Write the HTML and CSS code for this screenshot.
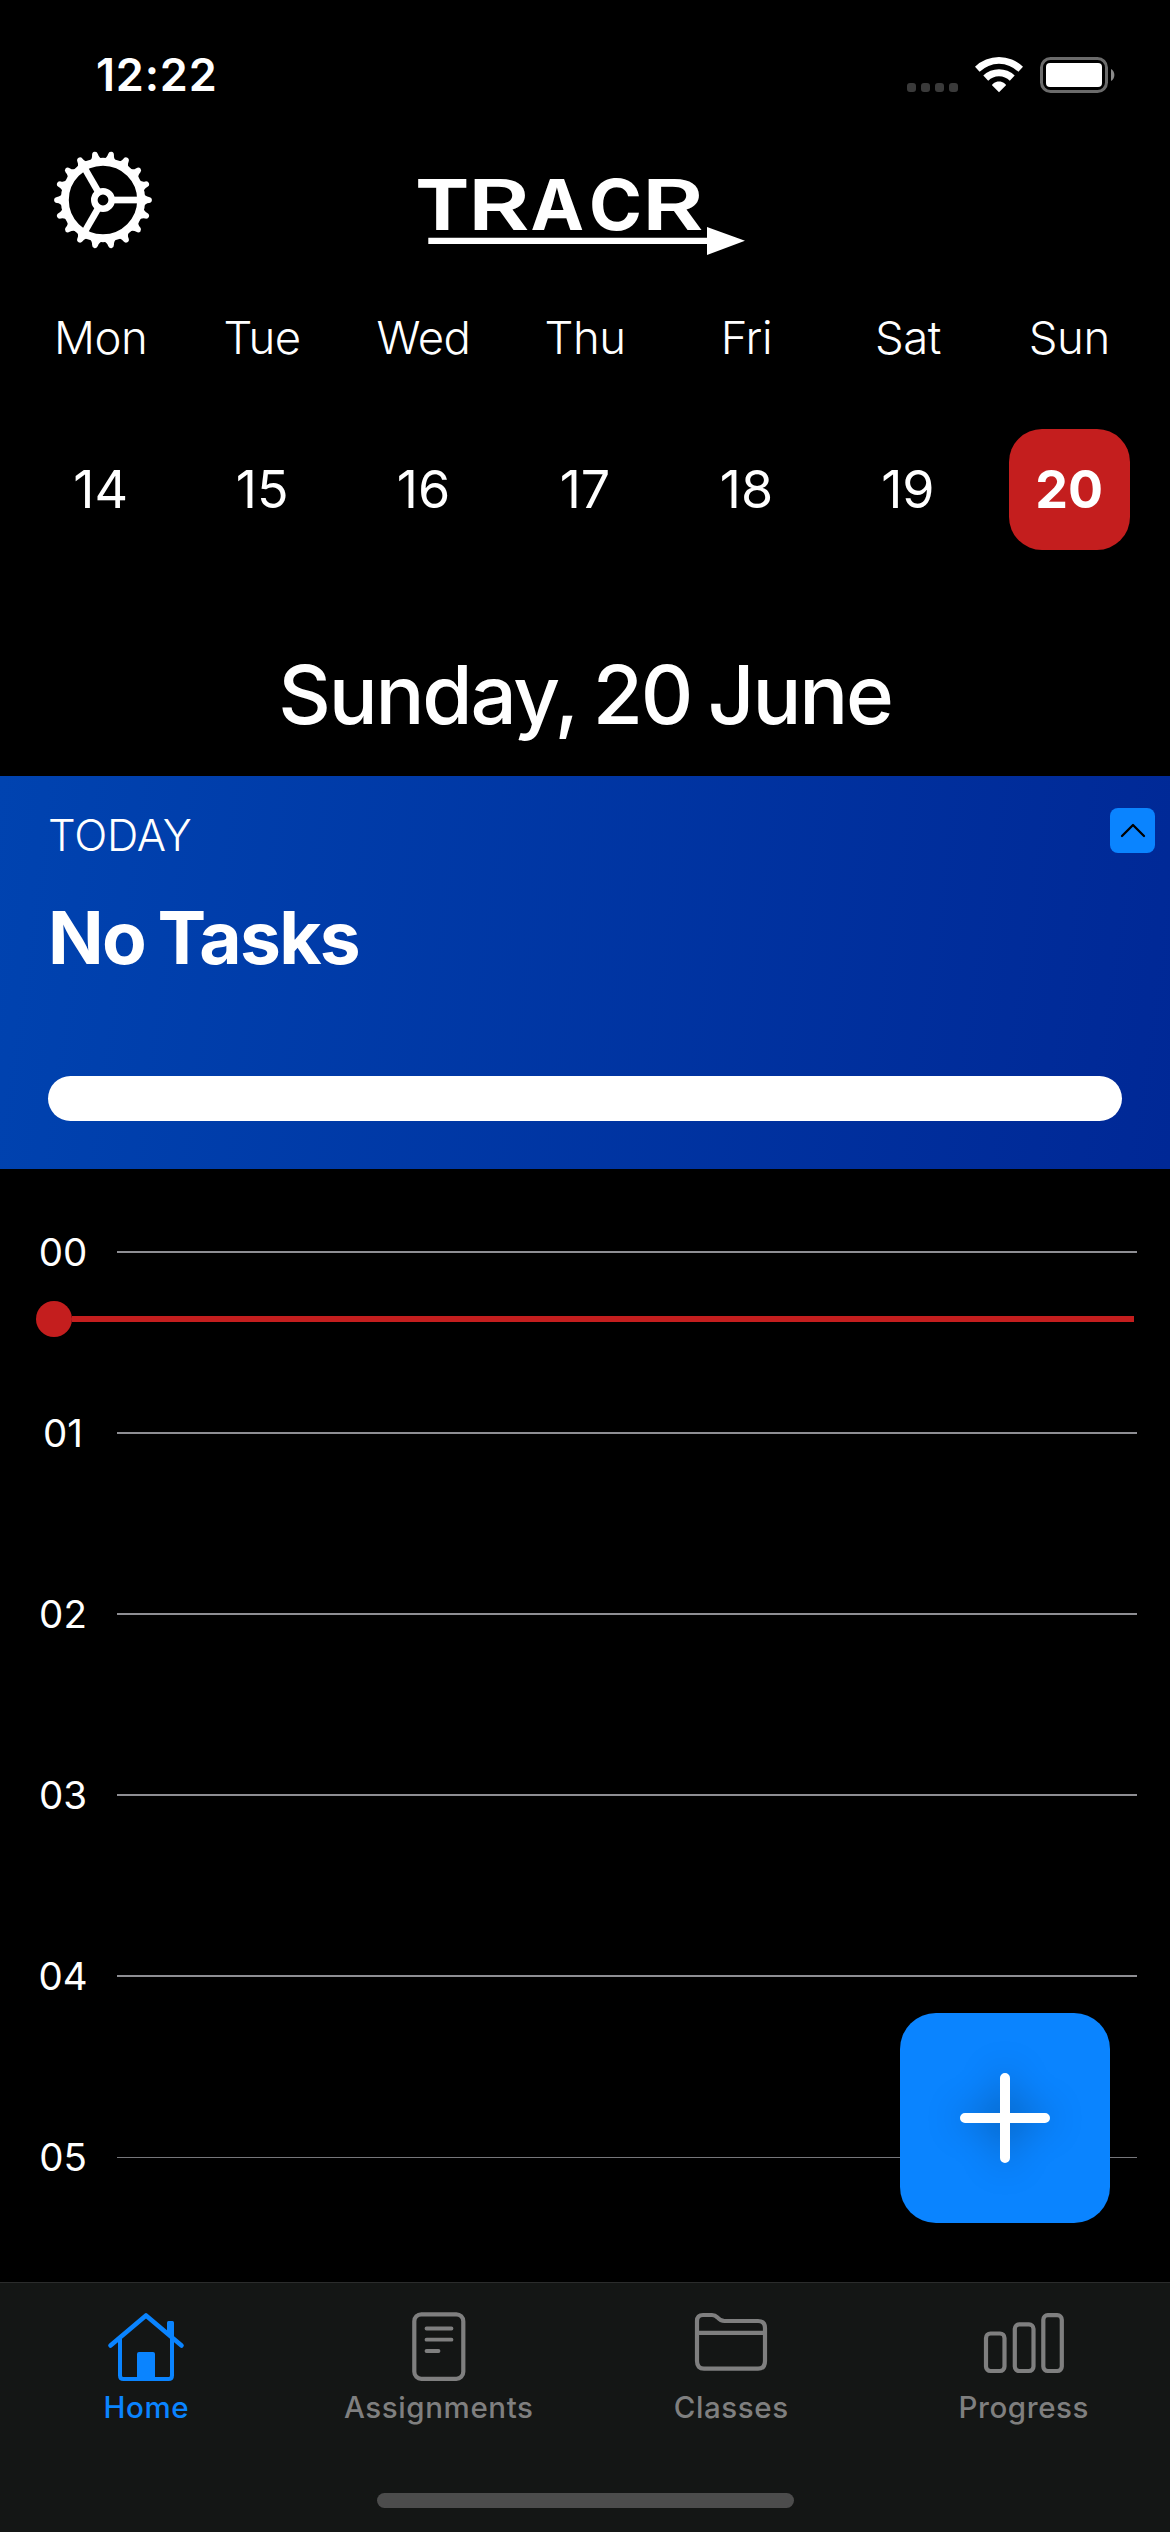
FILE: index.html
```html
<!DOCTYPE html>
<html lang="en">
<head>
<meta charset="utf-8">
<title>TRACR</title>
<link rel="stylesheet" href="styles.css">
</head>
<body>
<main class="app">
  <div class="status">
    <span class="time">12:22</span>
    <svg class="status-icons" width="210" height="40" viewBox="0 0 210 40">
      <g fill="#3a3a3a">
        <rect x="2" y="28" width="9" height="9" rx="3"/>
        <rect x="16" y="28" width="9" height="9" rx="3"/>
        <rect x="30" y="28" width="9" height="9" rx="3"/>
        <rect x="44" y="28" width="9" height="9" rx="3"/>
      </g>
      <g fill="#fff">
        <path d="M94 26.4 C89.8 26.4 87 29.2 87 30.2 L94 37.2 L101 30.2 C101 29.2 98.200 26.400 94 26.400 Z"/>
        <path d="M78.300 20.600 A22.400 22.400 0 0 1 109.700 20.600 L104.800 25.800 A15.200 15.200 0 0 0 83.200 25.800 Z"/>
        <path d="M70 11.800 A34.500 34.500 0 0 1 118 11.800 L113.400 16.800 A27.700 27.700 0 0 0 74.600 16.800 Z"/>
        <rect x="141" y="8" width="56" height="24" rx="4"/>
      </g>
      <rect x="136.500" y="3.500" width="65" height="33" rx="9" fill="none" stroke="#6b6b6b" stroke-width="3"/>
      <path d="M206 14 A7 7 0 0 1 206 26 Z" fill="#8a8a8a"/>
    </svg>
  </div>

  <header class="header">
    <svg class="gear" width="98" height="98" viewBox="-49 -49 98 98" fill="#fff">
      <defs>
        <path id="tooth" d="M40 -7.200 Q42.500 -3.200 46 -3 Q48.900 -2.500 48.900 0 Q48.900 2.500 46 3 Q42.500 3.200 40 7.200 Z"/>
      </defs>
      <circle r="38.200" fill="none" stroke="#fff" stroke-width="8"/>
      <circle r="8.700" fill="none" stroke="#fff" stroke-width="6.600"/>
      <g stroke="#fff" stroke-width="6.700">
        <path d="M11 0H36"/>
        <path d="M11 0H36" transform="rotate(120)"/>
        <path d="M11 0H36" transform="rotate(240)"/>
      </g>
      <use href="#tooth"/>
      <use href="#tooth" transform="rotate(20)"/>
      <use href="#tooth" transform="rotate(40)"/>
      <use href="#tooth" transform="rotate(60)"/>
      <use href="#tooth" transform="rotate(80)"/>
      <use href="#tooth" transform="rotate(100)"/>
      <use href="#tooth" transform="rotate(120)"/>
      <use href="#tooth" transform="rotate(140)"/>
      <use href="#tooth" transform="rotate(160)"/>
      <use href="#tooth" transform="rotate(180)"/>
      <use href="#tooth" transform="rotate(200)"/>
      <use href="#tooth" transform="rotate(220)"/>
      <use href="#tooth" transform="rotate(240)"/>
      <use href="#tooth" transform="rotate(260)"/>
      <use href="#tooth" transform="rotate(280)"/>
      <use href="#tooth" transform="rotate(300)"/>
      <use href="#tooth" transform="rotate(320)"/>
      <use href="#tooth" transform="rotate(340)"/>
    </svg>
    <svg class="logo" width="330" height="100" viewBox="0 -12 330 100">
      <text class="logo-text" y="60.700"><tspan x="0.200" textLength="54" lengthAdjust="spacingAndGlyphs">T</tspan><tspan class="logo-r" x="52.800" textLength="62" lengthAdjust="spacingAndGlyphs">R</tspan><tspan x="115.600" textLength="53.500" lengthAdjust="spacingAndGlyphs">A</tspan><tspan x="174" textLength="53" lengthAdjust="spacingAndGlyphs">C</tspan><tspan class="logo-r" x="226.800" textLength="62" lengthAdjust="spacingAndGlyphs">R</tspan></text>
      <path d="M13.300 68.700H292V58L330 71.700L292 86V75H13.300Z" fill="#fff"/>
    </svg>
  </header>

  <section class="week">
    <span class="day">Mon</span><span class="day">Tue</span><span class="day">Wed</span><span class="day">Thu</span><span class="day">Fri</span><span class="day">Sat</span><span class="day">Sun</span>
    <span class="date">14</span><span class="date">15</span><span class="date">16</span><span class="date">17</span><span class="date">18</span><span class="date">19</span><span class="date"><b class="selected">20</b></span>
  </section>

  <h1 class="title"><span>Sunday, 20 June</span></h1>

  <section class="card">
    <div class="card-top">
      <div class="card-copy">
        <span class="card-label">TODAY</span>
        <strong class="card-title">No Tasks</strong>
      </div>
      <span class="collapse">
        <svg width="45" height="45" viewBox="0 0 45 45"><path d="M12 28L23 17L34 28" fill="none" stroke="#000" stroke-width="2.300" stroke-linecap="round" stroke-linejoin="round"/></svg>
      </span>
    </div>
    <div class="progress"></div>
  </section>

  <section class="timeline">
    <div class="hour"><span class="hour-label">00</span><i class="rule"></i></div>
    <div class="hour"><span class="hour-label">01</span><i class="rule"></i></div>
    <div class="hour"><span class="hour-label">02</span><i class="rule"></i></div>
    <div class="hour"><span class="hour-label">03</span><i class="rule"></i></div>
    <div class="hour"><span class="hour-label">04</span><i class="rule"></i></div>
    <div class="hour"><span class="hour-label">05</span><i class="rule rule-thin"></i></div>
    <div class="now"><i class="now-dot"></i><i class="now-line"></i></div>
    <div class="add">
      <svg width="210" height="210" viewBox="0 0 210 210"><path class="plus" d="M105 65V145M65 105H145"/></svg>
    </div>
  </section>

  <nav class="tabs">
    <div class="tab-row">
      <div class="tab active">
        <svg width="90" height="76" viewBox="0 0 90 76" fill="none" stroke="currentColor" stroke-width="4" stroke-linecap="round" stroke-linejoin="round">
          <path d="M9.500 37.500L45 7.500L80.500 37.500" stroke-width="4.600"/>
          <path d="M19 31V67.500Q19 71 22.500 71H67.500Q71 71 71 67.500V31"/>
          <path d="M66 24V14.500Q66 13 67.500 13H71.500Q73 13 73 14.500V31Z" fill="currentColor" stroke="none"/>
          <path d="M36 71V46Q36 44 38 44H52Q54 44 54 46V71Z" fill="currentColor" stroke="none"/>
        </svg>
        <span class="tab-label">Home</span>
      </div>
      <div class="tab">
        <svg width="90" height="76" viewBox="0 0 90 76" fill="none" stroke="currentColor" stroke-width="4.200" stroke-linecap="round">
          <rect x="20.300" y="6.300" width="49" height="64.500" rx="7"/>
          <path d="M32.500 20.500H57.500M32.500 31.700H57.500M32.500 43H44.500" stroke-width="3.800"/>
        </svg>
        <span class="tab-label">Assignments</span>
      </div>
      <div class="tab">
        <svg width="90" height="76" viewBox="0 0 90 76" fill="none" stroke="currentColor" stroke-width="4.200" stroke-linejoin="round">
          <path d="M11 53V13Q11 7 17 7H26Q29 7 31.500 9.500Q34.500 13 38.500 13H72Q79 13 79 20V53Q79 60.700 72 60.700H18Q11 60.700 11 53Z"/>
          <path d="M11 24.800H79"/>
        </svg>
        <span class="tab-label">Classes</span>
      </div>
      <div class="tab">
        <svg width="90" height="76" viewBox="0 0 90 76" fill="none" stroke="currentColor" stroke-width="4.200">
          <rect x="7" y="25.500" width="18.500" height="37.500" rx="4.500"/>
          <rect x="35.800" y="16.300" width="18.700" height="46.700" rx="4.500"/>
          <rect x="64.300" y="7.200" width="18.500" height="55.800" rx="4.500"/>
        </svg>
        <span class="tab-label">Progress</span>
      </div>
    </div>
    <div class="home-indicator"></div>
  </nav>
</main>
</body>
</html>
```
FILE: styles.css
```css
* { box-sizing: border-box; }
body { margin: 0; background: #000; color: #fff; font-family: Inter, "Liberation Sans", sans-serif; }
i { font-style: normal; }
svg { display: block; flex: none; }

.app { width: 1170px; height: 2532px; display: flex; flex-direction: column; overflow: hidden; }

.status { height: 149px; padding: 0 55px 0 96px; display: flex; justify-content: space-between; align-items: center; }
.time { font-size: 45px; font-weight: 600; letter-spacing: 0.8px; }

.header { height: 102px; padding: 0 54px; display: grid; grid-template-columns: 98px 1fr 98px; grid-template-rows: 102px; align-items: center; }
.logo { justify-self: center; align-self: start; margin: 8px 10px 0 0; overflow: visible; }
.logo-text { font-size: 70px; font-weight: 700; fill: #fff; }
.logo-r { font-weight: 600; }

.week { padding: 0 20px; display: grid; grid-template-columns: repeat(7, 1fr); grid-template-rows: 173px 131px; align-items: center; justify-items: center; }
.day { font-size: 45.500px; font-weight: 300; letter-spacing: -0.5px; }
.date { font-size: 52px; }
.selected { display: flex; width: 121px; height: 121px; align-items: center; justify-content: center; border-radius: 33px; background: #c41e1e; font-weight: 700; }

.title { height: 163px; margin: 58px 0 0; display: flex; align-items: center; justify-content: center; font-size: 81.500px; font-weight: 500; letter-spacing: -2.2px; word-spacing: -3px; }

.card { height: 393px; padding: 32px 15px 48px 48px; display: flex; flex-direction: column; justify-content: space-between; background: linear-gradient(98deg, #0043b0, #002896); }
.card-top { display: flex; justify-content: space-between; align-items: flex-start; }
.card-copy { display: flex; flex-direction: column; }
.card-label { height: 54px; line-height: 54px; font-size: 43.500px; font-weight: 300; letter-spacing: -0.2px; }
.card-title { height: 90px; line-height: 90px; margin-top: 31px; font-size: 73px; font-weight: 700; letter-spacing: -1.7px; word-spacing: -3px; }
.collapse { width: 45px; height: 45px; border-radius: 8px; background: #0a84ff; }
.progress { height: 45px; margin-right: 33px; border-radius: 23px; background: #fff; }

.timeline { position: relative; height: 1113px; padding: 61px 33px 0 9px; display: flex; flex-direction: column; gap: 137px; }
.hour { height: 44px; display: flex; align-items: center; }
.hour-label { width: 108px; text-align: center; font-size: 38.500px; }
.rule { flex: 1; height: 2px; background: #8e8e93; }
.rule-thin { height: 1px; background: #77777b; }
.now { position: absolute; left: 36px; right: 36px; top: 132px; display: flex; align-items: center; }
.now-dot { width: 36px; height: 36px; border-radius: 50%; background: #c41e1e; }
.now-line { flex: 1; height: 6px; background: #c41e1e; }
.add { position: absolute; right: 60px; bottom: 59px; width: 210px; height: 210px; border-radius: 36px; background: #0a84ff; }
.plus { fill: none; stroke: #fff; stroke-width: 10px; stroke-linecap: round; filter: drop-shadow(0 0 18px rgba(0, 0, 0, 0.36)); }

.tabs { height: 250px; padding-bottom: 24px; border-top: 1px solid #2b2c2c; background: #141615; display: flex; flex-direction: column; justify-content: space-between; align-items: center; }
.tab-row { width: 100%; padding-top: 25px; display: grid; grid-template-columns: repeat(4, 1fr); }
.tab { display: flex; flex-direction: column; align-items: center; color: #7f7f7f; }
.active { color: #0a84ff; }
.tab-label { height: 36px; line-height: 36px; margin-top: 5px; font-size: 29.500px; font-weight: 500; letter-spacing: 0.6px; }
.home-indicator { width: 417px; height: 15px; border-radius: 8px; background: #4c4c4c; }
```
